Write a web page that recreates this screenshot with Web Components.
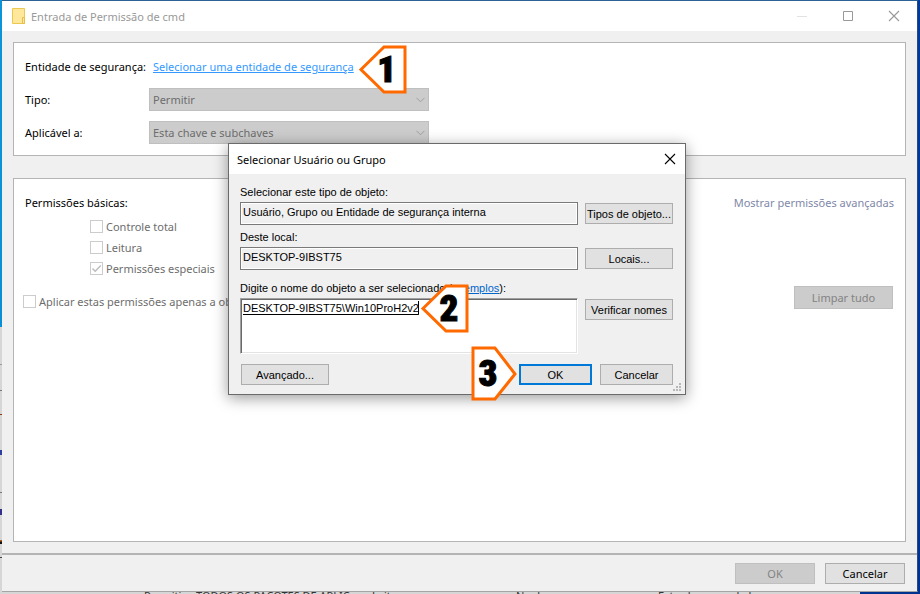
<!DOCTYPE html>
<html lang="pt-BR">
<head>
<meta charset="utf-8">
<title>Entrada de Permissão de cmd</title>
<style>
  html, body {
    margin: 0;
    height: 100%;
  }
  body {
    font-family: "Noto Sans", "Open Sans", sans-serif;
    font-size: 11px;
    color: #000;
    overflow: hidden;
  }
</style>
</head>
<body>
<desk-top>
  <permission-window></permission-window>
</desk-top>

<script>
class DeskTop extends HTMLElement {
  constructor() {
    super();
    this.attachShadow({ mode: 'open' });
  }

  connectedCallback() {
    this.shadowRoot.innerHTML = `
      <style>
        :host {
          display: flex;
          flex-direction: column;
          position: relative;
          box-sizing: border-box;
          height: 100vh;
          padding: 0 2px;
          background:
            linear-gradient(#0d94d8, #0a8fd4) 0 0 / 2px 327px no-repeat,
            linear-gradient(transparent 37px, #9a9a9a 37px 38px, transparent 38px 63px, #777 63px 64px,
              transparent 64px 87px, #8a3a10 87px 88px, transparent 88px 123px, #2f3f9f 123px 128px,
              transparent 128px 165px, #777 165px 166px, transparent 166px 182px, #32328a 182px 188px,
              transparent 188px 213px, #b06020 213px 214px, #111 215px 217px, transparent 217px 230px, #444 230px 231px,
              transparent 231px) 0 327px / 2px 267px no-repeat,
            linear-gradient(#003a9c, #00338f) 100% 0 / 60px 100% no-repeat,
            #d6d6d6;
        }
        .behind {
          display: grid;
          grid-template-columns: 52px 176px 144px 142px 1fr;
          height: 2px;
          padding-left: 142px;
          overflow: hidden;
          line-height: 8px;
          color: #333;
          white-space: nowrap;
        }
      </style>
      <slot></slot>
      <div class="behind">
        <span>Permitir</span>
        <span>TODOS OS PACOTES DE APLIC...</span>
        <span>Leitura</span>
        <span>Nenhum</span>
        <span>Esta chave e subchaves</span>
      </div>
    `;
  }
}

customElements.define('desk-top', DeskTop);

class WinButton extends HTMLElement {
  constructor() {
    super();
    this.attachShadow({ mode: 'open' });
  }

  connectedCallback() {
    const disabled = this.hasAttribute('disabled') ? 'disabled' : '';
    this.shadowRoot.innerHTML = `
      <style>
        :host {
          display: block;
          height: 21px;
        }
        button {
          box-sizing: border-box;
          width: 100%;
          height: 100%;
          padding: 0;
          border: 1px solid #adadad;
          background: #e1e1e1;
          color: #000;
          font: inherit;
          white-space: nowrap;
        }
        button:disabled {
          border-color: #bfbfbf;
          background: #ccc;
          color: #838383;
        }
        :host([primary]) button {
          border: 2px solid #0078d7;
        }
      </style>
      <button type="button" ${disabled}><slot></slot></button>
    `;
  }
}

customElements.define('win-button', WinButton);

class GroupPanel extends HTMLElement {
  constructor() {
    super();
    this.attachShadow({ mode: 'open' });
    this.shadowRoot.innerHTML = `
      <style>
        :host {
          display: block;
          box-sizing: border-box;
          border: 1px solid #b4b4b4;
          background: #fff;
        }
      </style>
      <slot></slot>
    `;
  }
}

customElements.define('group-panel', GroupPanel);

class SelectRow extends HTMLElement {
  constructor() {
    super();
    this.attachShadow({ mode: 'open' });
  }

  connectedCallback() {
    this.shadowRoot.innerHTML = `
      <style>
        :host {
          display: grid;
          grid-template-columns: 124px minmax(0, 280px);
          align-items: center;
          height: 33px;
        }
        .box {
          display: grid;
          align-items: center;
        }
        .box > * {
          grid-area: 1 / 1;
        }
        select {
          appearance: none;
          box-sizing: border-box;
          width: 100%;
          height: 23px;
          padding: 0 3px;
          border: 1px solid #bfbfbf;
          border-radius: 0;
          background: #ccc;
          color: #6d6d6d;
          font: inherit;
          opacity: 1;
        }
        svg {
          justify-self: end;
          margin-right: 4px;
        }
      </style>
      <label for="choice">${this.getAttribute('label')}</label>
      <div class="box">
        <select id="choice" disabled><option>${this.getAttribute('value')}</option></select>
        <svg width="9" height="6" viewBox="0 0 9 6" fill="none" stroke="#a0a0a0"><path d="M.5 .8 4.5 4.8 8.5 .8"/></svg>
      </div>
    `;
  }
}

customElements.define('select-row', SelectRow);

class CheckItem extends HTMLElement {
  constructor() {
    super();
    this.attachShadow({ mode: 'open' });
  }

  connectedCallback() {
    const checked = this.hasAttribute('checked') ? 'checked' : '';
    this.shadowRoot.innerHTML = `
      <style>
        :host {
          display: block;
          height: 21px;
          color: #6d6d6d;
        }
        label {
          display: inline-flex;
          align-items: center;
          gap: 3px;
          height: 21px;
          white-space: nowrap;
        }
        input {
          appearance: none;
          box-sizing: border-box;
          width: 13px;
          height: 13px;
          margin: 0;
          border: 1px solid #ccc;
          background: #fff;
        }
        input:checked {
          background: url('data:image/svg+xml,<svg xmlns="http://www.w3.org/2000/svg" viewBox="0 0 11 11"><path d="M1.5 5.5 4.2 8.2 9.8 2.5" fill="none" stroke="%23bbb" stroke-width="1.4"/></svg>');
        }
      </style>
      <label><input type="checkbox" disabled ${checked}><slot></slot></label>
    `;
  }
}

customElements.define('check-item', CheckItem);

// Numbered arrow that points left, or right with the "right" attribute
class StepMark extends HTMLElement {
  constructor() {
    super();
    this.attachShadow({ mode: 'open' });
  }

  connectedCallback() {
    const right = this.hasAttribute('right');
    const width = right ? 46 : 48;
    const height = right ? 55 : 49;
    const points = right ? '2,2 24,2 44,28 24,53 2,53' : '2,24.5 25,2 46,2 46,47 25,47';
    this.shadowRoot.innerHTML = `
      <style>
        :host {
          display: grid;
          width: ${width}px;
          height: ${height}px;
          color: #000;
          font-family: Impact, "Roboto Condensed", Roboto, sans-serif;
          font-size: 37px;
          font-weight: 900;
          line-height: ${height}px;
          -webkit-text-stroke: 1px #000;
        }
        svg, span {
          grid-area: 1 / 1;
        }
        span {
          text-align: center;
          padding: ${right ? '0 12px 0 0' : '0 0 0 8px'};
        }
      </style>
      <svg width="${width}" height="${height}" fill="#fff" stroke="#ff6a00" stroke-width="3">
        <polygon points="${points}"/>
      </svg>
      <span><slot></slot></span>
    `;
  }
}

customElements.define('step-mark', StepMark);

class PickerDialog extends HTMLElement {
  constructor() {
    super();
    this.attachShadow({ mode: 'open' });
  }

  connectedCallback() {
    this.shadowRoot.innerHTML = `
      <style>
        :host {
          display: block;
          box-sizing: border-box;
          border: 1px solid #6a6a6a;
          background: #f0f0f0;
          box-shadow: 0 3px 14px rgba(0, 0, 0, .4);
        }
        header {
          display: flex;
          align-items: center;
          justify-content: space-between;
          height: 30px;
          padding: 0 9px 0 8px;
          background: #fff;
        }
        h2 {
          margin: 0;
          font-size: 11px;
          font-weight: 400;
        }
        .close {
          display: flex;
          padding: 0;
          border: 0;
          background: none;
        }
        form {
          padding: 10px 12px 9px 11px;
          font-family: "Liberation Sans", Arial, sans-serif;
          font-size: 11px;
        }
        .caption {
          height: 18px;
          line-height: 16px;
        }
        .caption a {
          color: #0066cc;
        }
        .row {
          display: grid;
          grid-template-columns: 1fr 88px;
          gap: 7px;
          margin-bottom: 4px;
        }
        .row.wide {
          margin-bottom: 10px;
        }
        .row win-button {
          margin-top: 1px;
        }
        input, textarea {
          box-sizing: border-box;
          width: 100%;
          margin: 0;
          border-radius: 0;
          color: #000;
          font: inherit;
          outline: none;
        }
        input {
          height: 23px;
          padding: 0 2px 3px;
          border: 1px solid #7a7a7a;
          background: #f0f0f0;
          box-shadow: inset 0 0 0 1px #fff;
        }
        .names {
          position: relative;
          height: 56px;
        }
        textarea {
          display: block;
          height: 56px;
          padding: 2px;
          border: 1px solid;
          border-color: #a0a0a0 #fff #fff #a0a0a0;
          background: #fff;
          box-shadow: inset 1px 1px #696969, inset -1px -1px #e3e3e3;
          line-height: 14px;
          text-decoration: underline;
          text-underline-offset: 2px;
          resize: none;
        }
        .caret {
          position: absolute;
          left: 178px;
          top: 3px;
          width: 1px;
          height: 13px;
          background: #000;
        }
        .actions {
          display: grid;
          grid-template-columns: 88px 1fr 73px 73px;
          gap: 8px;
          padding-left: 1px;
        }
        .actions win-button:nth-child(2) {
          grid-column: 3;
        }
        step-mark, .grip {
          position: absolute;
        }
        .two {
          left: 192px;
          top: 140px;
        }
        .three {
          left: 242px;
          top: 202px;
        }
        .grip {
          right: 3px;
          bottom: 2px;
        }
      </style>
      <header>
        <h2>Selecionar Usuário ou Grupo</h2>
        <button class="close" type="button" aria-label="Fechar">
          <svg width="12" height="12" stroke="#000" stroke-width="1.1"><path d="M1 1 11 11M11 1 1 11"/></svg>
        </button>
      </header>
      <form>
        <div class="caption"><label for="type">Selecionar este tipo de objeto:</label></div>
        <div class="row">
          <input id="type" readonly value="Usuário, Grupo ou Entidade de segurança interna">
          <win-button>Tipos de objeto...</win-button>
        </div>
        <div class="caption"><label for="place">Deste local:</label></div>
        <div class="row wide">
          <input id="place" readonly value="DESKTOP-9IBST75">
          <win-button>Locais...</win-button>
        </div>
        <div class="caption"><label for="names">Digite o nome do objeto a ser selecionado</label> (<a href="#">exemplos</a>):</div>
        <div class="row wide">
          <div class="names">
            <textarea id="names" spellcheck="false">DESKTOP-9IBST75\\Win10ProH2v2</textarea>
            <span class="caret"></span>
          </div>
          <win-button>Verificar nomes</win-button>
        </div>
        <div class="actions">
          <win-button>Avançado...</win-button>
          <win-button primary>OK</win-button>
          <win-button>Cancelar</win-button>
        </div>
      </form>
      <svg class="grip" width="9" height="9" fill="#b8b8b8">
        <path d="M6 0h2v2H6zM3 3h2v2H3zM6 3h2v2H6zM0 6h2v2H0zM3 6h2v2H3zM6 6h2v2H6z"/>
      </svg>
      <step-mark class="two">2</step-mark>
      <step-mark class="three" right>3</step-mark>
    `;
  }
}

customElements.define('picker-dialog', PickerDialog);

class PermissionWindow extends HTMLElement {
  constructor() {
    super();
    this.attachShadow({ mode: 'open' });
  }

  connectedCallback() {
    this.shadowRoot.innerHTML = `
      <style>
        :host {
          display: flex;
          flex: 1;
          flex-direction: column;
          min-height: 0;
          border: 1px solid #2f72a8;
          border-width: 1px 1px 1px 0;
          border-color: #2a6296 #274a86 #a5a5a5;
          background: #f0f0f0;
        }
        header {
          display: flex;
          align-items: center;
          height: 30px;
          padding: 0 17px 0 10px;
          background: #fff;
          color: #999;
        }
        h1 {
          flex: 1;
          margin: 0 0 0 5px;
          font-size: 11px;
          font-weight: 400;
        }
        .controls {
          display: flex;
          gap: 34px;
        }
        .controls button {
          display: flex;
          padding: 0;
          border: 0;
          background: none;
        }
        main {
          display: flex;
          flex: 1;
          flex-direction: column;
          gap: 22px;
          padding: 11px 11px;
        }
        .entry {
          padding: 7px 11px 6px;
        }
        .principal {
          display: grid;
          grid-template-columns: 124px auto;
          justify-content: start;
          align-items: center;
          height: 33px;
          white-space: nowrap;
        }
        .link {
          position: relative;
          z-index: 1;
          padding-left: 4px;
        }
        .principal a {
          color: #3399ff;
        }
        .principal step-mark {
          position: absolute;
          left: calc(100% + 5px);
          top: -14px;
        }
        .permissions {
          flex: 1;
          padding: 14px 11px 0;
        }
        .top, .bottom {
          display: flex;
          justify-content: space-between;
        }
        .top {
          height: 23px;
          line-height: 20px;
        }
        .top a {
          color: #8088a8;
          text-decoration: none;
        }
        .checks {
          padding-left: 65px;
        }
        .bottom {
          padding: 7px 1px 0 0;
        }
        .bottom check-item {
          margin: 5px 0 0 -2px;
        }
        .bottom win-button {
          width: 99px;
          height: 23px;
        }
        footer {
          display: flex;
          justify-content: flex-end;
          gap: 10px;
          padding: 8px 12px 7px;
          border-top: 2px solid #b4b4b4;
        }
        footer win-button {
          width: 80px;
        }
        picker-dialog {
          position: absolute;
          z-index: 2;
          left: 228px;
          top: 143px;
          width: 458px;
        }
      </style>
      <header>
        <svg width="14" height="16"><path d="M.5 .5h12v15H.5z" fill="#ffe79b" stroke="#ecc853"/><path d="M10.500 9.500h2v6h-2z" fill="#ffe79b" stroke="#e8bf45"/></svg>
        <h1>Entrada de Permissão de cmd</h1>
        <div class="controls">
          <button type="button" aria-label="Minimizar" disabled><svg width="11" height="12"><path d="M0 6.500h10" stroke="#e2e2e2"/></svg></button>
          <button type="button" aria-label="Maximizar"><svg width="12" height="12"><path d="M1.500 1.500h9v9h-9z" fill="none" stroke="#999"/></svg></button>
          <button type="button" aria-label="Fechar"><svg width="12" height="12"><path d="M1 1 11 11M11 1 1 11" stroke="#999" stroke-width="1.100"/></svg></button>
        </div>
      </header>
      <main>
        <group-panel class="entry">
          <div class="principal">
            <span>Entidade de segurança:</span>
            <div class="link">
              <a href="#">Selecionar uma entidade de segurança</a>
              <step-mark>1</step-mark>
            </div>
          </div>
          <select-row label="Tipo:" value="Permitir"></select-row>
          <select-row label="Aplicável a:" value="Esta chave e subchaves"></select-row>
        </group-panel>
        <group-panel class="permissions">
          <div class="top">
            <span>Permissões básicas:</span>
            <a href="#">Mostrar permissões avançadas</a>
          </div>
          <div class="checks">
            <check-item>Controle total</check-item>
            <check-item>Leitura</check-item>
            <check-item checked>Permissões especiais</check-item>
          </div>
          <div class="bottom">
            <check-item>Aplicar estas permissões apenas a objetos</check-item>
            <win-button disabled>Limpar tudo</win-button>
          </div>
        </group-panel>
      </main>
      <footer>
        <win-button disabled>OK</win-button>
        <win-button>Cancelar</win-button>
      </footer>
      <picker-dialog></picker-dialog>
    `;
  }
}

customElements.define('permission-window', PermissionWindow);
</script>
</body>
</html>
